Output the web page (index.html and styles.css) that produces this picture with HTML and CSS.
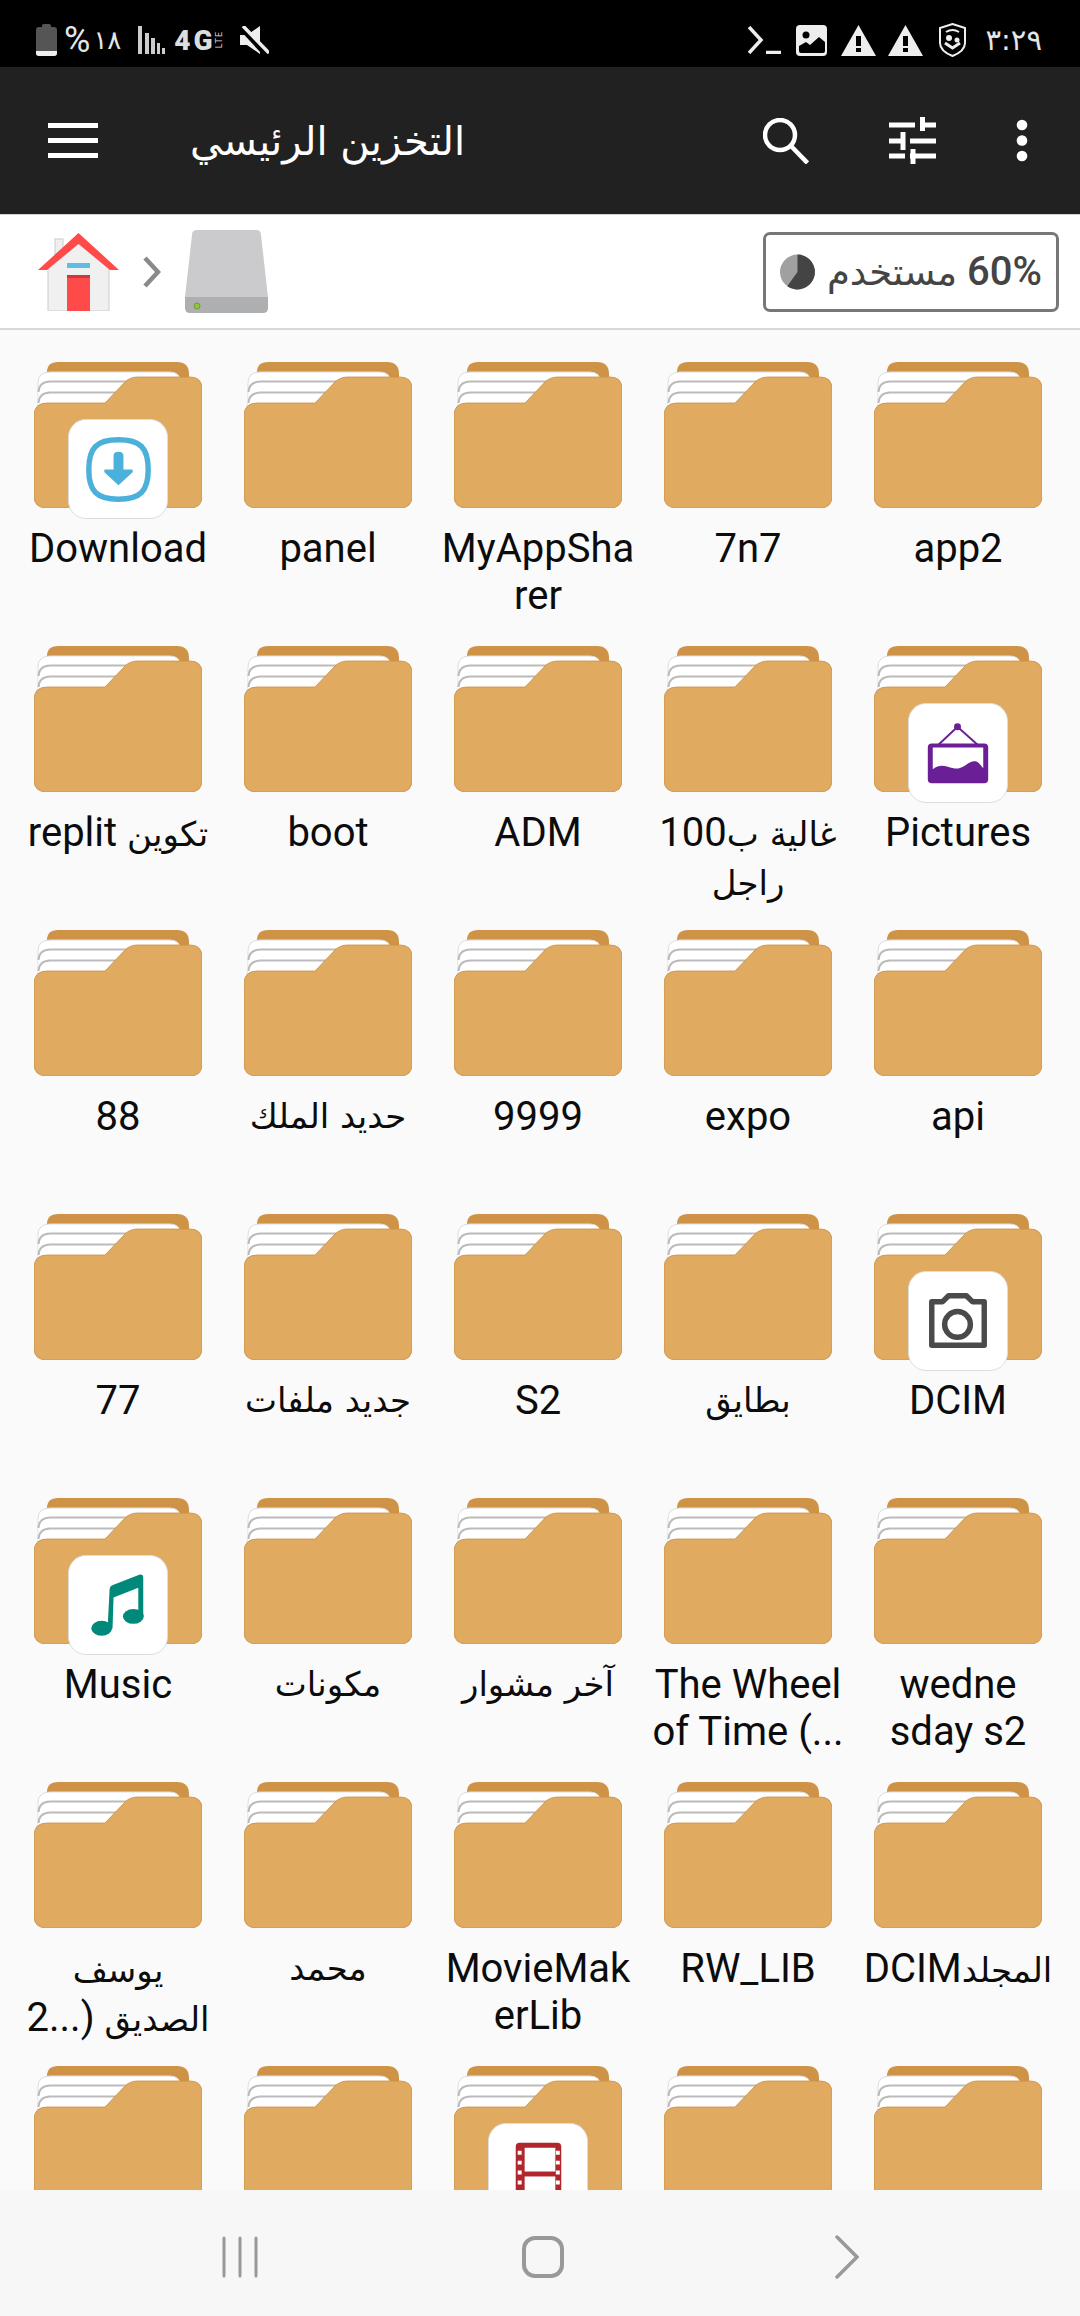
FILE: index.html
```html
<!DOCTYPE html>
<html lang="ar">
<head>
  <meta charset="UTF-8">
  <title>التخزين الرئيسي</title>
  <link rel="stylesheet" href="styles.css">
</head>
<body>

  <svg class="defs" width="0" height="0" aria-hidden="true">
    <symbol id="folder" viewBox="0 0 168 146">
      <path d="M13 24V10Q13 0 24 0H143Q155 0 155 12V30H13Z" fill="#cf9348"/>
      <path d="M4 60V21Q4 10 16 10H136Q146 10 147 20V60Z" fill="#fff" stroke="#ddd" stroke-width="1"/>
      <path d="M4.500 60V30Q5 20 16 19.500H120V60Z" fill="#fff"/>
      <path d="M4.500 30Q5 20 16 19.500H110" fill="none" stroke="#bbb" stroke-width="2"/>
      <path d="M4.500 60V41Q5 31 16 30.500H100V60Z" fill="#fff"/>
      <path d="M4.500 41Q5 31 16 30.500H100" fill="none" stroke="#bbb" stroke-width="2"/>
      <path d="M0 54Q0 41 13 41H71L91 20Q96 15 104 15H156Q168 15 168 27V134Q168 146 156 146H13Q0 146 0 134Z" fill="#e0aa60" stroke="#cb8f45" stroke-width="0.800"/>
    </symbol>
  </svg>

  <div class="status-bar">
    <div class="status-left">
      <svg class="ic-battery" width="21" height="32" viewBox="0 0 21 32">
        <path d="M6 1.500Q6 0 8 0H13Q15 0 15 1.500V3H18Q21 3 21 6V29Q21 32 18 32H3Q0 32 0 29V6Q0 3 3 3H6Z" fill="#555"/>
        <path d="M0 27H21V29Q21 32 18 32H3Q0 32 0 29Z" fill="#eee"/>
      </svg>
      <span class="batt-pct">%</span>
      <span class="status-text batt-text">١٨</span>
      <svg class="ic-signal" width="27" height="28" viewBox="0 0 27 28" fill="#ccc">
        <rect x="0" y="0" width="4" height="28"/>
        <rect x="7" y="7" width="4" height="21"/>
        <rect x="13" y="12" width="4" height="16"/>
        <rect x="19" y="17" width="3" height="11"/>
        <rect x="24" y="22" width="3" height="6"/>
      </svg>
      <span class="net-4g">4G</span>
      <span class="net-lte">LTE</span>
      <svg class="ic-mute" width="29" height="28" viewBox="0 0 29 28">
        <path d="M0 9H7L20 0V28L7 19H0Z" fill="#eee"/>
        <path d="M1 1L27 29" stroke="#000" stroke-width="6"/>
        <path d="M3 0L29 27" stroke="#eee" stroke-width="3.500"/>
      </svg>
    </div>
    <div class="status-right">
      <svg width="33" height="28" viewBox="0 0 33 28" fill="none" stroke="#eee" stroke-width="3.500">
        <path d="M1 1L13 14L1 27"/>
        <path d="M18 26.500H33"/>
      </svg>
      <svg class="ic-gallery" width="31" height="31" viewBox="0 0 31 31">
        <rect width="31" height="31" rx="4" fill="#eee"/>
        <circle cx="10" cy="10" r="3.500" fill="#000"/>
        <path d="M3 26V21L10 17L14 20L23 12L29 17V26Q29 28 27 28H5Q3 28 3 26Z" fill="#000"/>
      </svg>
      <svg class="ic-warn" width="35" height="31" viewBox="0 0 35 31">
        <path d="M17.500 0L35 31H0Z" fill="#eee"/>
        <rect x="15" y="11" width="5" height="10" fill="#000"/>
        <rect x="15" y="23" width="5" height="4" fill="#000"/>
      </svg>
      <svg class="ic-warn2" width="35" height="31" viewBox="0 0 35 31">
        <path d="M17.500 0L35 31H0Z" fill="#eee"/>
        <rect x="15" y="11" width="5" height="10" fill="#000"/>
        <rect x="15" y="23" width="5" height="4" fill="#000"/>
      </svg>
      <svg class="ic-shield" width="27" height="34" viewBox="0 0 27 34" fill="none" stroke="#eee">
        <path d="M13.500 1L26 5V20Q26 28 13.500 33Q1 28 1 20V5Z" stroke-width="2"/>
        <path d="M7 9Q13.500 5 20 9" stroke-width="2"/>
        <circle cx="10" cy="15" r="3" fill="#eee" stroke="none"/>
        <circle cx="18" cy="17" r="2.500" fill="#eee" stroke="none"/>
        <path d="M6 20L13.500 25L21 20" stroke-width="3"/>
      </svg>
      <span class="status-text time-text">٣:٢٩</span>
    </div>
  </div>

  <header class="app-bar">
    <div class="menu-btn"><span></span><span></span><span></span></div>
    <h1 class="app-title">التخزين الرئيسي</h1>
    <div class="app-actions">
      <svg width="46" height="46" viewBox="0 0 46 46" fill="none" stroke="#fff" stroke-width="4.500">
        <circle cx="17" cy="17" r="15"/>
        <path d="M28 28L44.500 45"/>
      </svg>
      <svg width="47" height="47" viewBox="0 0 47 47" fill="none" stroke="#fff" stroke-width="5">
        <path d="M0 8H26M33 8H47M33.500 0V14"/>
        <path d="M0 24H16M21 24H47M14 15V33"/>
        <path d="M0 39H16M21 39H47M24 32V47"/>
      </svg>
      <svg width="12" height="44" viewBox="0 0 12 44" fill="#fff">
        <circle cx="6" cy="6" r="5.300"/>
        <circle cx="6" cy="21.500" r="5.300"/>
        <circle cx="6" cy="37" r="5.300"/>
      </svg>
    </div>
  </header>

  <div class="crumbs">
    <div class="crumb-path">
      <svg width="81" height="78" viewBox="0 0 81 78">
        <rect x="17" y="6" width="8" height="20" fill="#efefef" stroke="#ccc"/>
        <path d="M10 30L40.500 7L71 30V78H10Z" fill="#f0f0f0" stroke="#ccc"/>
        <path d="M40.500 0L81 37H72L40.500 11L9 37H0Z" fill="#ff4a4a"/>
        <rect x="29" y="30" width="23" height="5" fill="#5ebde2"/>
        <rect x="29" y="42" width="23" height="36" fill="#ff4a4a"/>
        <rect x="29" y="42" width="23" height="3" fill="#c93a3a"/>
      </svg>
      <svg width="18" height="32" viewBox="0 0 18 32" fill="none" stroke="#8a8a8a" stroke-width="4.500">
        <path d="M2 2L15 16L2 30"/>
      </svg>
      <svg width="83" height="83" viewBox="0 0 83 83">
        <path d="M7 5Q7 0 12 0H71Q76 0 76 5L83 67H0Z" fill="#cbcbcd"/>
        <path d="M0 67H83V78Q83 83 78 83H5Q0 83 0 78Z" fill="#aeafb0"/>
        <circle cx="12" cy="76" r="3" fill="#8cc63f" stroke="#6e9c33"/>
      </svg>
    </div>
    <div class="usage">
      <svg width="42" height="42" viewBox="0 0 42 42">
        <circle cx="21" cy="21" r="21" fill="#a0a0a0"/>
        <path d="M21 21V0A21 21 0 1 1 8.700 38Z" fill="#444"/>
      </svg>
      <span class="usage-text" dir="rtl">60% <span class="usage-ar">مستخدم</span></span>
    </div>
  </div>

  <main class="files">
    <div class="grid">

      <div class="cell"><div class="thumb"><svg class="folder"><use href="#folder"/></svg>
        <div class="badge"><svg viewBox="0 0 99 99">
          <path d="M50 20C72 20 80 28 80 50C80 72 72 80 50 80C28 80 20 72 20 50C20 28 28 20 50 20Z" fill="none" stroke="#4cb1da" stroke-width="5.500"/>
          <path d="M45 36Q45 32 50 32Q55 32 55 36V50H64Q65 52 64 53L50 66L36 53Q35 52 36 50H45Z" fill="#4cb1da"/>
        </svg></div></div>
        <div class="name">Download</div></div>
      <div class="cell"><div class="thumb"><svg class="folder"><use href="#folder"/></svg></div><div class="name">panel</div></div>
      <div class="cell"><div class="thumb"><svg class="folder"><use href="#folder"/></svg></div><div class="name">MyAppSha<br>rer</div></div>
      <div class="cell"><div class="thumb"><svg class="folder"><use href="#folder"/></svg></div><div class="name">7n7</div></div>
      <div class="cell"><div class="thumb"><svg class="folder"><use href="#folder"/></svg></div><div class="name">app2</div></div>

      <div class="cell"><div class="thumb"><svg class="folder"><use href="#folder"/></svg></div><div class="name"><span class="ar">تكوين</span> replit</div></div>
      <div class="cell"><div class="thumb"><svg class="folder"><use href="#folder"/></svg></div><div class="name">boot</div></div>
      <div class="cell"><div class="thumb"><svg class="folder"><use href="#folder"/></svg></div><div class="name">ADM</div></div>
      <div class="cell"><div class="thumb"><svg class="folder"><use href="#folder"/></svg></div><div class="name"><span class="ar">غالية ب</span>100<br><span class="ar">راجل</span></div></div>
      <div class="cell"><div class="thumb"><svg class="folder"><use href="#folder"/></svg>
        <div class="badge"><svg viewBox="0 0 99 99">
          <circle cx="49" cy="23" r="3.500" fill="#6a1f96"/>
          <path d="M30 41L49 23L69 41" fill="none" stroke="#6a1f96" stroke-width="2"/>
          <path fill-rule="evenodd" d="M23 40H76Q80 40 80 44V76Q80 80 76 80H23Q19 80 19 76V44Q19 40 23 40ZM24 44V66C32 60 36 63 45 65C56 67 60 56 68 58C71 59 73 63 75 65V44Z" fill="#6a1f96"/>
        </svg></div></div>
        <div class="name">Pictures</div></div>

      <div class="cell"><div class="thumb"><svg class="folder"><use href="#folder"/></svg></div><div class="name">88</div></div>
      <div class="cell"><div class="thumb"><svg class="folder"><use href="#folder"/></svg></div><div class="name ar">حديد الملك</div></div>
      <div class="cell"><div class="thumb"><svg class="folder"><use href="#folder"/></svg></div><div class="name">9999</div></div>
      <div class="cell"><div class="thumb"><svg class="folder"><use href="#folder"/></svg></div><div class="name">expo</div></div>
      <div class="cell"><div class="thumb"><svg class="folder"><use href="#folder"/></svg></div><div class="name">api</div></div>

      <div class="cell"><div class="thumb"><svg class="folder"><use href="#folder"/></svg></div><div class="name">77</div></div>
      <div class="cell"><div class="thumb"><svg class="folder"><use href="#folder"/></svg></div><div class="name ar">جديد ملفات</div></div>
      <div class="cell"><div class="thumb"><svg class="folder"><use href="#folder"/></svg></div><div class="name">S2</div></div>
      <div class="cell"><div class="thumb"><svg class="folder"><use href="#folder"/></svg></div><div class="name ar">بطايق</div></div>
      <div class="cell"><div class="thumb"><svg class="folder"><use href="#folder"/></svg>
        <div class="badge"><svg viewBox="0 0 99 99">
          <path d="M23 30H34L40 24H58L64 30H76V74H23Z" fill="none" stroke="#4a4a4a" stroke-width="5.500" stroke-linejoin="round"/>
          <circle cx="49" cy="53" r="13" fill="none" stroke="#4a4a4a" stroke-width="5.500"/>
        </svg></div></div>
        <div class="name">DCIM</div></div>

      <div class="cell"><div class="thumb"><svg class="folder"><use href="#folder"/></svg>
        <div class="badge"><svg viewBox="0 0 99 99">
          <ellipse cx="33" cy="73" rx="10.500" ry="7.500" fill="#00897b"/>
          <ellipse cx="65" cy="61" rx="10.500" ry="7.500" fill="#00897b"/>
          <path d="M39 73L41 34Q41 30 45 29L71 19Q75 18 75 22V61H70V32L45 42L44 73Z" fill="#00897b"/>
        </svg></div></div>
        <div class="name">Music</div></div>
      <div class="cell"><div class="thumb"><svg class="folder"><use href="#folder"/></svg></div><div class="name ar">مكونات</div></div>
      <div class="cell"><div class="thumb"><svg class="folder"><use href="#folder"/></svg></div><div class="name ar">آخر مشوار</div></div>
      <div class="cell"><div class="thumb"><svg class="folder"><use href="#folder"/></svg></div><div class="name">The Wheel<br>of Time (...</div></div>
      <div class="cell"><div class="thumb"><svg class="folder"><use href="#folder"/></svg></div><div class="name">wedne<br>sday s2</div></div>

      <div class="cell"><div class="thumb"><svg class="folder"><use href="#folder"/></svg></div><div class="name"><span class="ar">يوسف</span><br><span class="ar">الصديق</span> (...2</div></div>
      <div class="cell"><div class="thumb"><svg class="folder"><use href="#folder"/></svg></div><div class="name ar">محمد</div></div>
      <div class="cell"><div class="thumb"><svg class="folder"><use href="#folder"/></svg></div><div class="name">MovieMak<br>erLib</div></div>
      <div class="cell"><div class="thumb"><svg class="folder"><use href="#folder"/></svg></div><div class="name">RW_LIB</div></div>
      <div class="cell"><div class="thumb"><svg class="folder"><use href="#folder"/></svg></div><div class="name"><span class="ar">المجلد</span>DCIM</div></div>

      <div class="cell"><div class="thumb"><svg class="folder"><use href="#folder"/></svg></div></div>
      <div class="cell"><div class="thumb"><svg class="folder"><use href="#folder"/></svg></div></div>
      <div class="cell"><div class="thumb"><svg class="folder"><use href="#folder"/></svg>
        <div class="badge"><svg viewBox="0 0 99 99">
          <path d="M31 19H69Q73 19 73 23V99H27V23Q27 19 31 19Z" fill="#b0262c"/>
          <rect x="36" y="24" width="31" height="24" fill="#fff"/>
          <rect x="36" y="53" width="31" height="40" fill="#fff"/>
          <path d="M31 27V99M69.500 27V99" stroke="#fff" stroke-width="4" stroke-dasharray="4 6"/>
        </svg></div></div></div>
      <div class="cell"><div class="thumb"><svg class="folder"><use href="#folder"/></svg></div></div>
      <div class="cell"><div class="thumb"><svg class="folder"><use href="#folder"/></svg></div></div>

    </div>
  </main>

  <nav class="nav-bar">
    <svg width="38" height="42" viewBox="0 0 38 42" stroke="#999" stroke-width="3" stroke-linecap="round">
      <path d="M3 2V40M19 2V40M35 2V40"/>
    </svg>
    <svg width="42" height="42" viewBox="0 0 42 42" fill="none" stroke="#999" stroke-width="4">
      <rect x="2" y="2" width="38" height="38" rx="11"/>
    </svg>
    <svg width="24" height="44" viewBox="0 0 24 44" fill="none" stroke="#999" stroke-width="3.500" stroke-linecap="round">
      <path d="M2 2L22 22L2 42"/>
    </svg>
  </nav>

</body>
</html>
```

FILE: styles.css
```css
* {
  box-sizing: border-box;
}

html, body {
  height: 100%;
}

body {
  margin: 0;
  display: flex;
  flex-direction: column;
  height: 2316px;
  overflow: hidden;
  background: #fafafa;
  font-family: Roboto, "DejaVu Sans", sans-serif;
  color: #0c0c0c;
}

.defs {
  position: absolute;
}

/* status bar */
.status-bar {
  flex: none;
  height: 67px;
  padding: 22px 38px 0 36px;
  display: flex;
  justify-content: space-between;
  align-items: flex-start;
  background: #000;
  color: #eee;
}

.status-left,
.status-right {
  display: flex;
  align-items: center;
  height: 36px;
}

.status-text {
  font-family: "DejaVu Sans", sans-serif;
  color: #e6e6e6;
}

.batt-pct {
  margin-left: 7px;
  font-size: 36px;
  color: #e6e6e6;
}

.batt-text {
  margin-left: 3px;
  font-size: 26px;
}

.time-text {
  margin-left: 20px;
  font-size: 29px;
}

.ic-signal {
  margin-left: 17px;
}

.net-4g {
  margin-left: 9px;
  font-size: 28px;
  font-weight: 900;
  letter-spacing: 3px;
  color: #ddd;
}

.net-lte {
  margin-left: -1px;
  writing-mode: vertical-rl;
  transform: rotate(180deg);
  font-size: 9px;
  line-height: 9px;
  letter-spacing: 1px;
  color: #ddd;
}

.ic-mute {
  margin-left: 16px;
}

.ic-gallery {
  margin-left: 15px;
}

.ic-warn {
  margin-left: 14px;
}

.ic-warn2 {
  margin-left: 12px;
}

.ic-shield {
  margin-left: 16px;
}

/* app bar */
.app-bar {
  flex: none;
  height: 147px;
  display: flex;
  align-items: center;
  padding: 0 52px 0 48px;
  background: #212121;
  color: #fff;
}

.menu-btn {
  width: 50px;
  display: flex;
  flex-direction: column;
  gap: 10px;
}

.menu-btn span {
  height: 5px;
  background: #fff;
}

.app-title {
  margin: 0 0 0 92px;
  flex: 1;
  font-family: "DejaVu Sans", sans-serif;
  font-size: 40px;
  font-weight: 400;
  direction: rtl;
  text-align: left;
}

.app-actions {
  display: flex;
  align-items: center;
  gap: 80px;
}

/* breadcrumb row */
.crumbs {
  flex: none;
  height: 116px;
  display: flex;
  align-items: center;
  justify-content: space-between;
  padding: 0 21px 0 38px;
  background: #fff;
  border-top: 1px solid #d0d0d0;
  border-bottom: 2px solid #d8d8d8;
}

.crumb-path {
  display: flex;
  align-items: center;
  gap: 24px;
}

.usage {
  width: 296px;
  height: 80px;
  display: flex;
  align-items: center;
  gap: 12px;
  padding: 0 14px;
  border: 3px solid #777;
  border-radius: 7px;
}

.usage-text {
  font-size: 40px;
  font-weight: 500;
  color: #444;
  white-space: nowrap;
}

.usage-ar {
  font-family: "DejaVu Sans", sans-serif;
  font-size: 37px;
  font-weight: 400;
}

/* folder grid */
.files {
  flex: 1;
  overflow: hidden;
}

.grid {
  display: grid;
  grid-template-columns: repeat(5, 210px);
  grid-auto-rows: 284px;
  padding: 32px 0 0 13px;
}

.cell {
  display: flex;
  flex-direction: column;
  align-items: center;
}

.thumb {
  position: relative;
  width: 168px;
  height: 146px;
}

.folder {
  display: block;
  width: 168px;
  height: 146px;
}

.badge {
  position: absolute;
  left: 34px;
  top: 57px;
  width: 100px;
  height: 100px;
  background: #fff;
  border: 1px solid #ddd;
  border-radius: 18px;
}

.badge svg {
  display: block;
  width: 100%;
  height: 100%;
}

.name {
  width: 210px;
  margin-top: 17px;
  font-size: 40px;
  line-height: 47px;
  text-align: center;
  unicode-bidi: plaintext;
}

.ar {
  font-family: "DejaVu Sans", sans-serif;
  font-size: 34px;
}

/* navigation bar */
.nav-bar {
  flex: none;
  height: 126px;
  display: grid;
  grid-template-columns: 221px 38px 263px 42px 271px 24px;
  align-items: center;
  padding-top: 8px;
  background: #f7f7f7;
}

.nav-bar svg:nth-child(1) {
  grid-column: 2;
}

.nav-bar svg:nth-child(2) {
  grid-column: 4;
}

.nav-bar svg:nth-child(3) {
  grid-column: 6;
}
```
